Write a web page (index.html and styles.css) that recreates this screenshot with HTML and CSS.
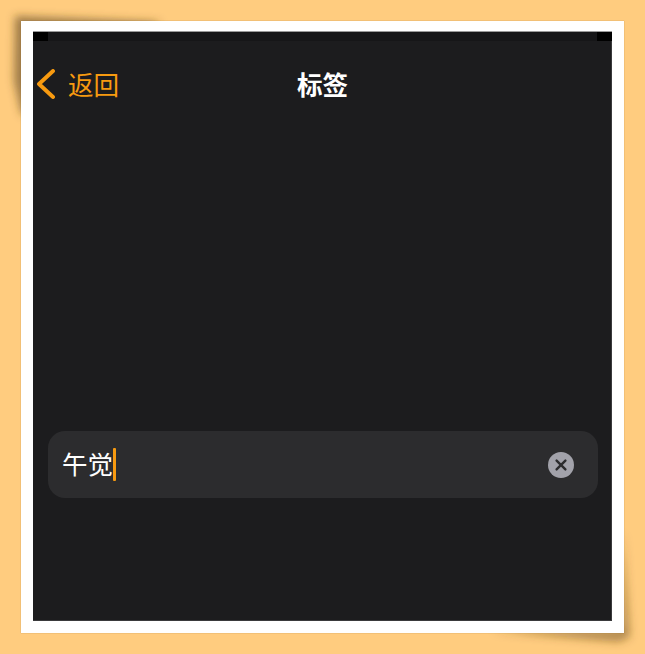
FILE: index.html
```html
<!DOCTYPE html>
<html lang="zh">
<head>
<meta charset="utf-8">
<title>标签</title>
<link rel="stylesheet" href="styles.css">
</head>
<body>
<div class="frame">
  <svg class="curl" width="645" height="654" viewBox="-21 -21 645 654" aria-hidden="true">
    <defs>
      <filter id="soft" x="-30%" y="-30%" width="160%" height="160%"><feGaussianBlur stdDeviation="4"/></filter>
    </defs>
    <polygon class="curl-shade" points="-6,-5 140,1 1,95 -7,60" filter="url(#soft)"/>
    <polygon class="curl-shade curl-shade-soft" points="470,610 598,621 609,616 602,510 600,608" filter="url(#soft)"/>
  </svg>
  <div class="screen">
    <div class="statusbar"><span class="corner"></span><span class="corner"></span></div>
    <header class="nav">
      <a class="back">
        <svg class="chevron" width="20" height="30" viewBox="0 0 20 30"><path d="M18 2 L4 15 L18 28" fill="none" stroke="#f79a10" stroke-width="3.9" stroke-linecap="round" stroke-linejoin="round"/></svg>
        <span class="back-label">返回</span>
      </a>
      <h1 class="title">标签</h1>
    </header>
    <div class="field">
      <span class="value">午觉</span><span class="caret"></span>
      <span class="clear">
        <svg width="26" height="26" viewBox="0 0 26 26"><circle cx="13" cy="13" r="13" fill="#a2a2aa"/><path d="M8.6 8.6 L17.4 17.4 M17.4 8.6 L8.6 17.4" stroke="#2c2c2e" stroke-width="2.4" stroke-linecap="round"/></svg>
      </span>
    </div>
  </div>
</div>
</body>
</html>
```

FILE: styles.css
```css
* { box-sizing: border-box; }
html, body { margin: 0; height: 100%; }
body {
  background: #ffcc7f;
  padding: 21px;
  font-family: "Noto Sans CJK SC", "Liberation Sans", sans-serif;
  overflow: hidden;
}
.frame {
  position: relative;
  width: 603px;
  height: 612px;
  background: #fff;
  padding: 10px 12px 12px 12px;
  box-shadow: 0 0 1px rgba(120, 90, 40, .55);
}
.curl {
  position: absolute;
  z-index: -1;
  left: -21px;
  top: -21px;
}
.curl-shade { fill: rgba(90, 65, 25, .58); }
.curl-shade-soft { fill: rgba(90, 65, 25, .46); }
.screen {
  height: 590px;
  background: #1c1c1e;
  border-top: 1px solid #9a9a9a;
  box-shadow: inset -1px -1px 0 #3a3a3c;
  display: flex;
  flex-direction: column;
}
.statusbar {
  height: 9px;
  background: #161618;
  display: flex;
  justify-content: space-between;
}
.corner { width: 15px; height: 9px; background: #000; }
.nav {
  position: relative;
  height: 86px;
  display: flex;
  align-items: center;
  justify-content: center;
}
.back {
  position: absolute;
  left: 0;
  top: 0;
  bottom: 0;
  display: flex;
  align-items: center;
  color: #f79a10;
}
.chevron { margin-left: 2px; }
.back-label { margin-left: 13px; font-size: 25.6px; line-height: 30px; }
.title { margin: 0; color: #fff; font-size: 25.6px; font-weight: 700; line-height: 30px; }
.field {
  margin: 304px 14px 0 15px;
  height: 67px;
  border-radius: 17px;
  background: #2c2c2e;
  display: flex;
  align-items: center;
  padding: 0 24px 0 14px;
  color: #fff;
  font-size: 25.5px;
  line-height: 30px;
}
.value { margin-top: -3px; }
.caret { width: 3px; height: 33px; background: #f79a10; border-radius: 1px; }
.clear { margin-left: auto; display: flex; }
```
